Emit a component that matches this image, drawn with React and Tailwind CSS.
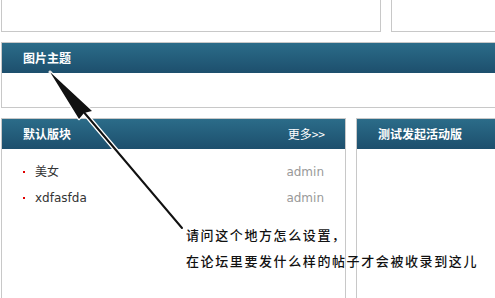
const cjk = { fontFamily: '"DejaVu Sans", "Noto Sans CJK SC", sans-serif' };
const head = { fontFamily: '"Noto Sans CJK SC", sans-serif' };

function Header({ title, more }) {
    return (
        <div className="flex h-[30px] items-center justify-between bg-[linear-gradient(#2b6c89,#1d4f6d)] pl-[21px] pr-[20px]">
            <span className="text-[12px] font-bold leading-none text-white" style={head}>
                {title}
            </span>
            {more && (
                <span className="text-[12px] leading-none text-white" style={head}>
                    更多&gt;&gt;
                </span>
            )}
        </div>
    );
}

function Item({ title }) {
    return (
        <li className="flex h-[26px] items-center">
            <span className="ml-[21px] h-[2px] w-[2px] bg-[#e00000]"></span>
            <span className="ml-[10px] flex-1 text-[12px] text-[#333]" style={cjk}>
                {title}
            </span>
            <span className="mr-[21px] text-[12px] text-[#999]" style={cjk}>
                admin
            </span>
        </li>
    );
}

function Arrow() {
    return (
        <svg
            className="pointer-events-none absolute left-0 top-0"
            width="495"
            height="298"
            viewBox="0 0 495 298"
        >
            <line x1="82" y1="110" x2="182" y2="228" stroke="#fff" strokeWidth="5" strokeLinecap="round" />
            <polygon points="50,72 92,111 84,113 79,119" fill="#111" stroke="#fff" strokeWidth="2.5" strokeLinejoin="round" />
            <line x1="82" y1="110" x2="182" y2="228" stroke="#111" strokeWidth="2" strokeLinecap="round" />
            <polygon points="50,72 92,111 84,113 79,119" fill="#111" />
            <circle cx="50" cy="72" r="1.5" fill="#e8e8e8" />
        </svg>
    );
}

export default function App() {
    return (
        <div className="relative h-[298px] w-[495px] overflow-hidden bg-white">
            <div className="flex h-[32px]">
                <div className="ml-[1px] w-[380px] border border-t-0 border-[#c8c8c8]"></div>
                <div className="ml-[10px] flex-1 border border-r-0 border-t-0 border-[#c8c8c8]"></div>
            </div>

            <div className="ml-[1px] mt-[10px] border border-r-0 border-[#c8c8c8]">
                <Header title="图片主题" />
                <div className="h-[34px]"></div>
            </div>

            <div className="mt-[10px] flex h-[180px]">
                <div className="ml-[1px] w-[345px] border border-b-0 border-[#c8c8c8]">
                    <Header title="默认版块" more />
                    <ul className="pt-[10px]">
                        <Item title="美女" />
                        <Item title="xdfasfda" />
                    </ul>
                </div>
                <div className="ml-[10px] flex-1 border border-b-0 border-r-0 border-[#c8c8c8]">
                    <Header title="测试发起活动版" />
                </div>
            </div>

            <Arrow />

            <div
                className="absolute left-[186px] top-[222px] text-[13px] font-medium leading-[26px] tracking-[1.6px] text-[#111]"
                style={head}
            >
                <p>请问这个地方怎么设置，</p>
                <p>在论坛里要发什么样的帖子才会被收录到这儿</p>
            </div>
        </div>
    );
}
